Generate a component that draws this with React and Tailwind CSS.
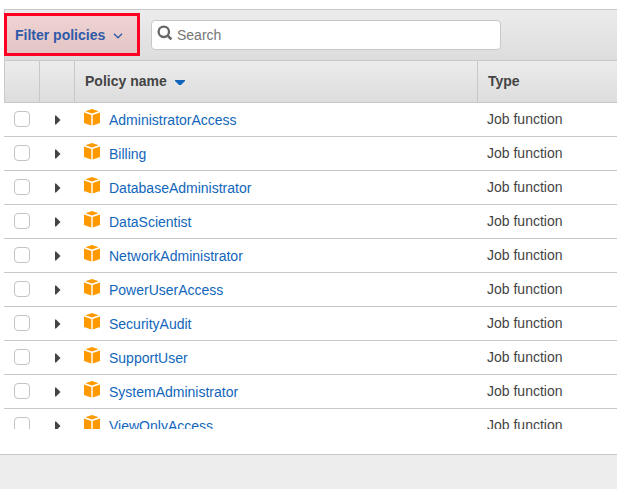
import { useState } from "react";

const POLICIES = [
  "AdministratorAccess",
  "Billing",
  "DatabaseAdministrator",
  "DataScientist",
  "NetworkAdministrator",
  "PowerUserAccess",
  "SecurityAudit",
  "SupportUser",
  "SystemAdministrator",
  "ViewOnlyAccess",
];

function BoxIcon() {
  return (
    <svg width="16" height="17" viewBox="0 0 16 17" fill="#ff9900" aria-hidden="true">
      <path d="M8 0 14.6 2.3 8 4.6 1.4 2.3z" />
      <path d="M0 3.4 7.3 6V16.4L0 14z" />
      <path d="M16 3.4 8.7 6V16.4L16 14z" />
    </svg>
  );
}

function SearchIcon() {
  return (
    <svg width="16" height="16" viewBox="0 0 16 16" fill="none" stroke="#666" aria-hidden="true">
      <circle cx="6.8" cy="6.8" r="5.2" strokeWidth="2.3" />
      <path d="M10.6 10.6 14.4 14.4" strokeWidth="2.6" />
    </svg>
  );
}

function Toolbar() {
  const [query, setQuery] = useState("");
  return (
    <div className="flex items-center gap-[11px] border-y border-l border-[#c8c8c8] bg-linear-to-b from-[#ececec] to-[#dddddd] pt-[3px] pb-1">
      <button
        type="button"
        className="-ml-px flex h-[43px] w-[136px] items-center gap-2 border-3 border-[#ff0022] bg-linear-to-b from-[#efd2d2] to-[#e3c5c5] pl-2 text-sm font-bold text-[#2e5aa8]"
      >
        Filter policies
        <svg width="10" height="6" viewBox="0 0 10 6" fill="none" stroke="#2e5aa8" strokeWidth="1.3" className="mt-[2px]" aria-hidden="true">
          <path d="M1 0.8 5 4.8 9 0.8" />
        </svg>
      </button>
      <label className="flex h-[30px] w-[350px] items-center gap-1 rounded border border-[#c8c8c8] bg-white pl-[5px]">
        <span className="pb-1">
          <SearchIcon />
        </span>
        <input
          type="text"
          aria-label="Search policies"
          placeholder="Search"
          value={query}
          onChange={(e) => setQuery(e.target.value)}
          className="min-w-0 flex-1 bg-transparent text-sm text-[#444] outline-none placeholder:text-[#757575]"
        />
      </label>
    </div>
  );
}

function PolicyRow({ name }) {
  return (
    <tr className="h-[34px]">
      <td className="border-b border-[#c8c8c8] pb-[2px] pl-[10px]">
        <input
          type="checkbox"
          aria-label={"Select " + name}
          className="block size-4 appearance-none rounded border border-[#c4c4c4] bg-white checked:bg-[#146eb4]"
        />
      </td>
      <td className="border-b border-[#c8c8c8] pl-4">
        <button type="button" aria-label={"Expand " + name} className="block">
          <svg width="6" height="10" viewBox="0 0 6 10" fill="#444" aria-hidden="true">
            <path d="M0 0.5h1L5.5 5 1 9.5H0z" />
          </svg>
        </button>
      </td>
      <td className="border-b border-[#c8c8c8] pl-[10px]">
        <div className="flex items-center gap-[9px]">
          <span className="pb-1">
            <BoxIcon />
          </span>
          <a href="#policy" className="pt-px text-[#1166bb]">
            {name}
          </a>
        </div>
      </td>
      <td className="border-b border-[#c8c8c8] pb-[2px] pl-[10px] text-[#444]">Job function</td>
    </tr>
  );
}

function PolicyTable() {
  return (
    <div className="max-h-[368px] overflow-hidden">
      <table className="w-full table-fixed border-separate border-spacing-0 text-left text-sm">
        <colgroup>
          <col className="w-[35px]" />
          <col className="w-[35px]" />
          <col className="w-[403px]" />
          <col />
        </colgroup>
        <thead className="text-[#444]">
          <tr className="h-[42px]">
            <th aria-label="Select" className="border-b border-l border-[#c8c8c8] bg-linear-to-b from-[#ececec] to-[#dddddd]" />
            <th aria-label="Details" className="border-b border-l border-[#c8c8c8] bg-linear-to-b from-[#ececec] to-[#dddddd]" />
            <th className="border-b border-l border-[#c8c8c8] bg-linear-to-b from-[#ececec] to-[#dddddd] pb-[2px] pl-[10px]">
              <button type="button" className="flex items-center gap-2 font-bold">
                Policy name
                <svg width="10" height="5" viewBox="0 0 10 5" fill="#1166bb" className="mt-[3px]" aria-hidden="true">
                  <path d="M0 0h10v1L6 5H4L0 1z" />
                </svg>
              </button>
            </th>
            <th className="border-b border-l border-[#c8c8c8] bg-linear-to-b from-[#ececec] to-[#dddddd] pb-[2px] pl-[10px]">Type</th>
          </tr>
        </thead>
        <tbody>
          {POLICIES.map((name) => (
            <PolicyRow key={name} name={name} />
          ))}
        </tbody>
      </table>
    </div>
  );
}

export default function App() {
  return (
    <div className="flex min-h-screen flex-col bg-white font-['Liberation_Sans',Arial,sans-serif]">
      <main className="pt-[9px] pb-[25px] pl-1">
        <Toolbar />
        <PolicyTable />
      </main>
      <footer className="flex-1 border-t border-[#c8c8c8] bg-[#ededed]" />
    </div>
  );
}
